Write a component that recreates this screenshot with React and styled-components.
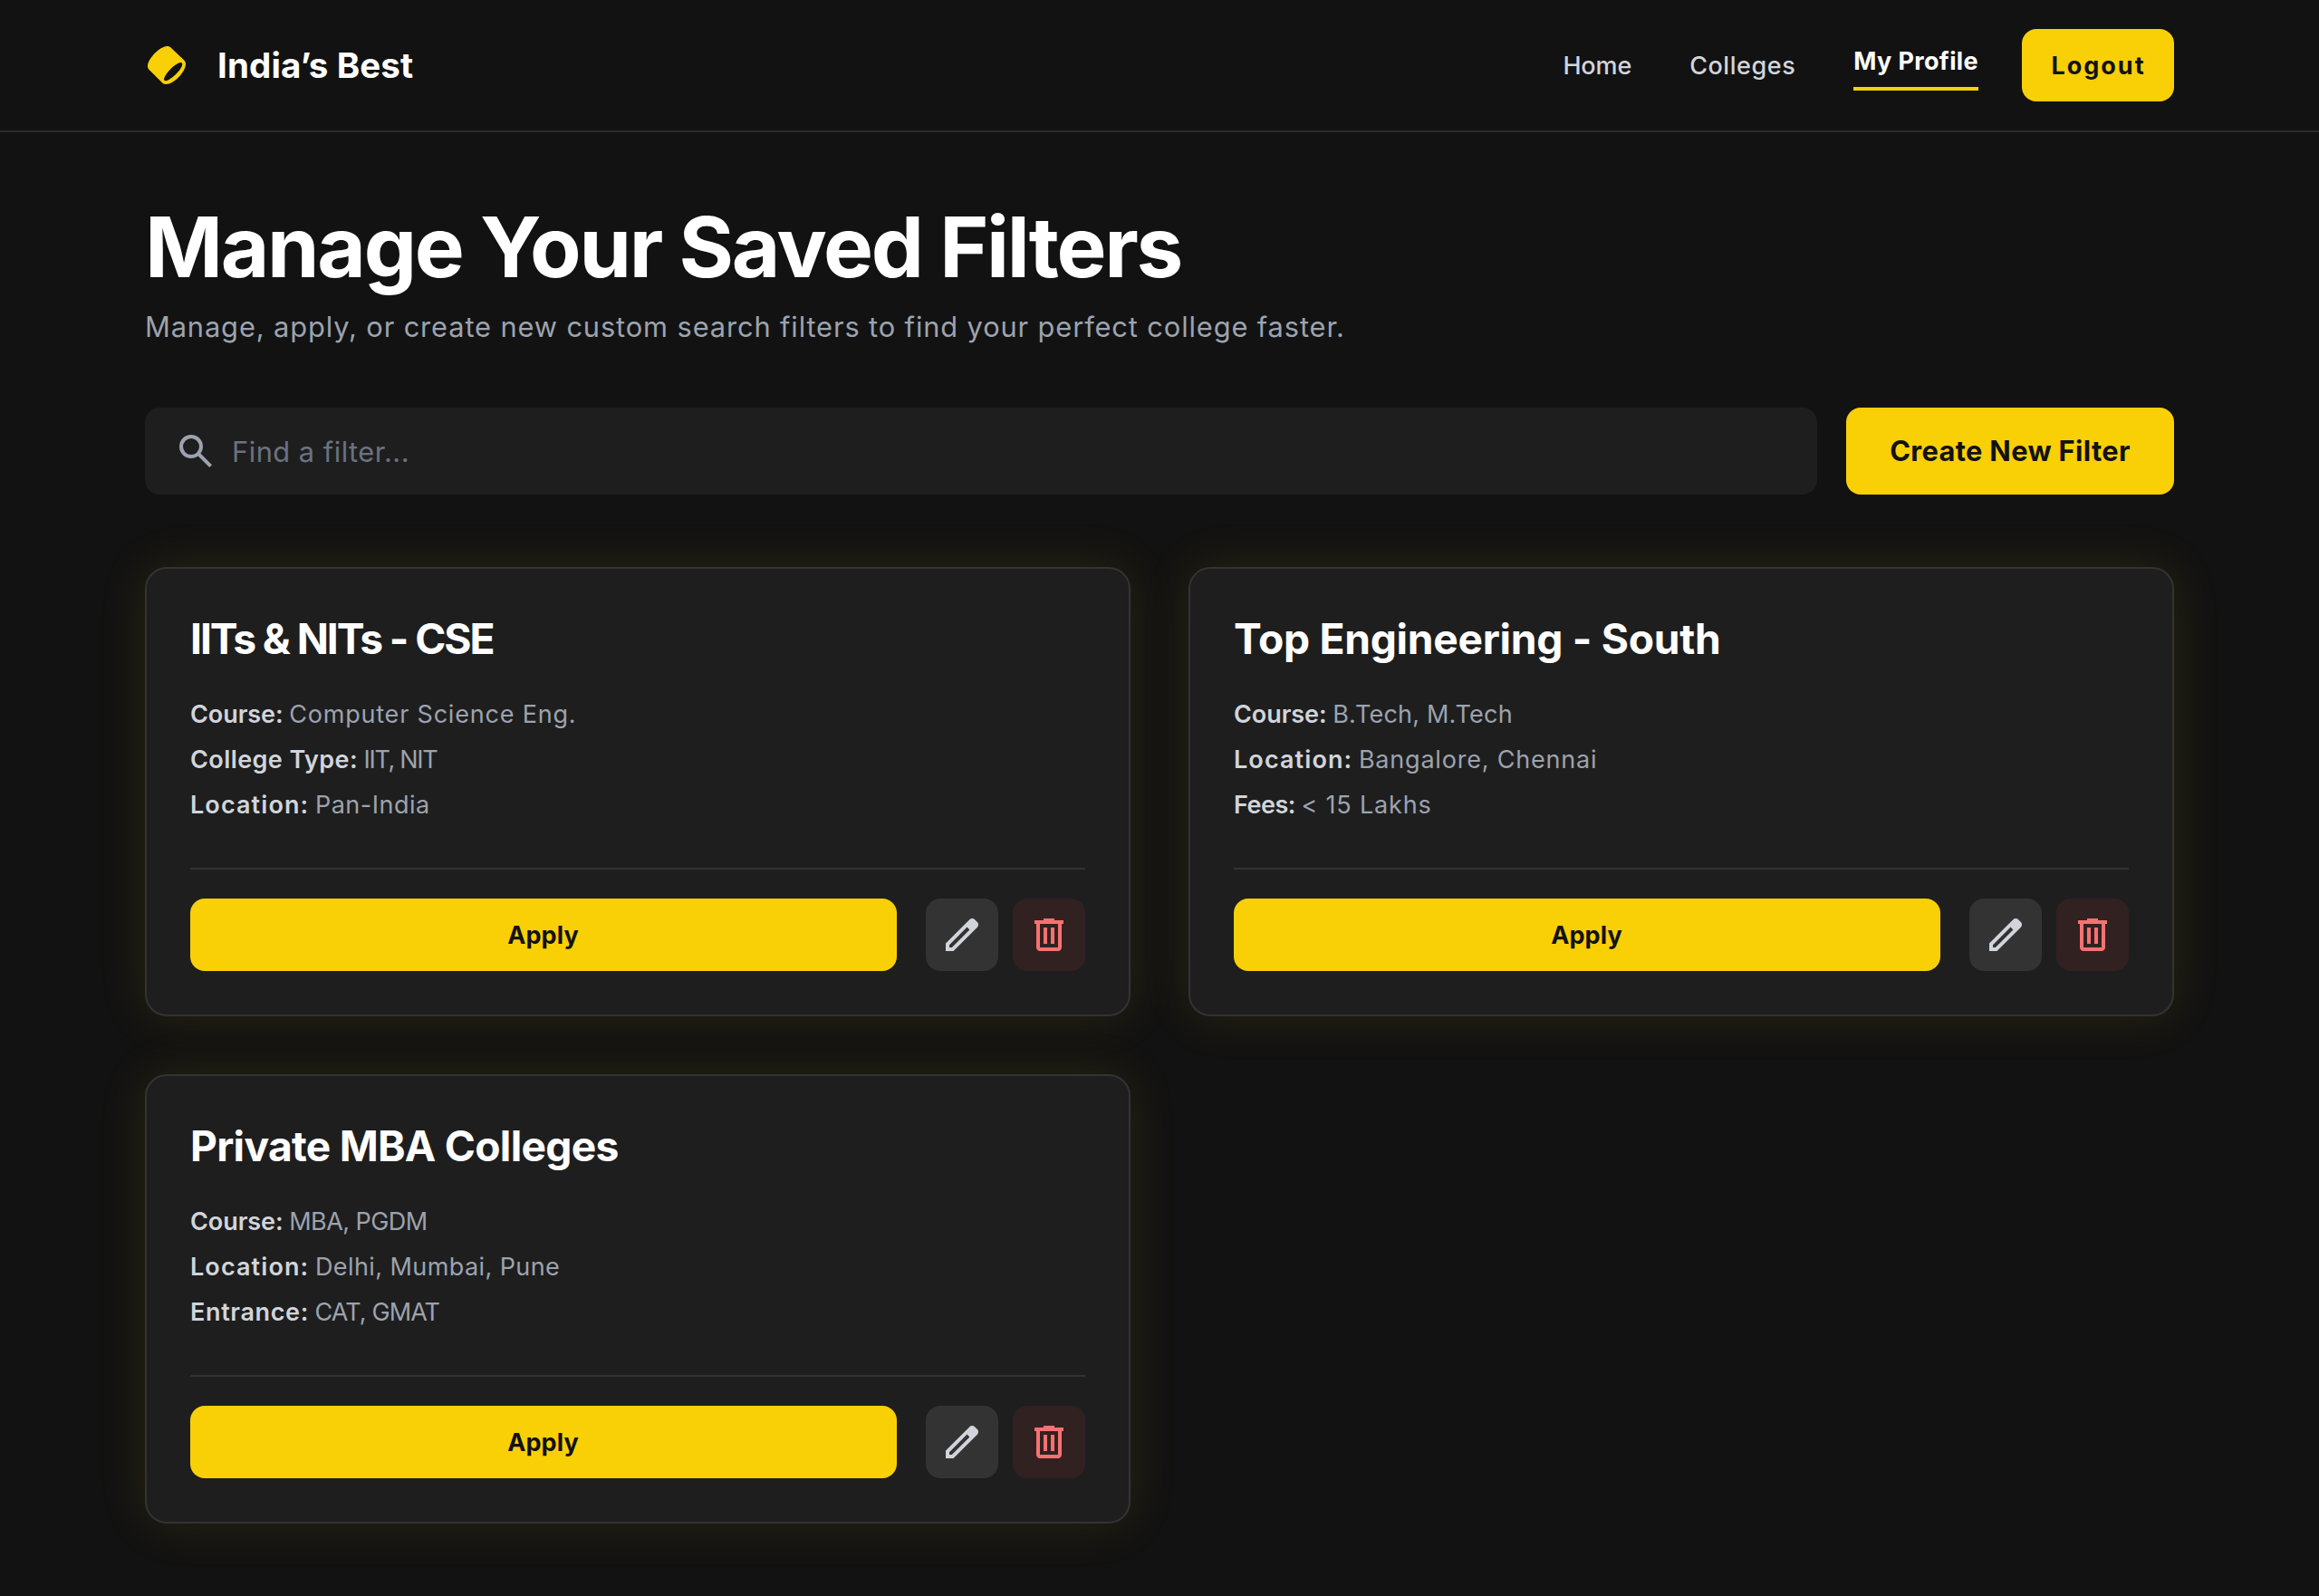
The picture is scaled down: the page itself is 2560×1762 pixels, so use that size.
import React from "react";
import styled, { createGlobalStyle } from "styled-components";

const color = {
  page: "#121212",
  surface: "#1e1e1e",
  line: "#333333",
  headerLine: "#2a2a2a",
  accent: "#f9d006",
  text: "#ffffff",
  soft: "#d1d5db",
  muted: "#9ca3af",
  faint: "#6b7280",
  danger: "#f87171",
};

const GlobalStyle = createGlobalStyle`
  *, *::before, *::after { box-sizing: border-box; }
  body {
    margin: 0;
    background: ${color.page};
    color: ${color.text};
    font-family: Inter, "Liberation Sans", sans-serif;
  }
  h1, h2, p, ul { margin: 0; padding: 0; }
  button, input { font-family: inherit; border: 0; }
`;

const Page = styled.div`
  min-height: 1762px;
  display: flex;
  flex-direction: column;
`;

const Header = styled.header`
  display: flex;
  align-items: center;
  justify-content: space-between;
  height: 146px;
  padding: 0 160px;
  border-bottom: 2px solid ${color.headerLine};
`;

const Brand = styled.div`
  display: flex;
  align-items: center;
  gap: 32px;
  font-size: 38.5px;
  font-weight: 700;
  line-height: 48px;
  letter-spacing: 0.11px;
`;

const Logo = styled.svg`
  display: block;
  width: 48px;
  height: 48px;
`;

const HeaderSide = styled.div`
  display: flex;
  align-items: center;
  gap: 48px;
`;

const Nav = styled.nav`
  display: flex;
  align-items: center;
  gap: 64px;
`;

const NavLink = styled.a`
  display: block;
  padding-top: 2px;
  font-size: 27px;
  line-height: 44px;
  white-space: nowrap;
  letter-spacing: ${(p) => p.$track}px;
  font-weight: ${(p) => (p.$active ? 700 : 500)};
  color: ${(p) => (p.$active ? color.text : color.soft)};
  ${(p) =>
    p.$active &&
    `
    line-height: 43px;
    padding-bottom: 7px;
    border-bottom: 4px solid ${color.accent};
  `}
`;

const Button = styled.button`
  display: flex;
  align-items: center;
  justify-content: center;
  padding: 0;
  border-radius: 16px;
  background: ${color.accent};
  color: ${color.page};
  font-weight: 700;
  white-space: nowrap;
`;

const LogoutButton = styled(Button)`
  width: 168px;
  height: 80px;
  padding-left: 1px;
  font-size: 27px;
  letter-spacing: 1.99px;
`;

const CreateButton = styled(Button)`
  flex: none;
  width: 362px;
  height: 96px;
  padding-bottom: 2px;
  font-size: 30.8px;
  letter-spacing: 0.35px;
`;

const ApplyButton = styled(Button)`
  flex: 1;
  height: 80px;
  padding-right: 1px;
  font-size: 27px;
  letter-spacing: 0.1px;
`;

const Main = styled.main`
  padding: 80px 160px;
`;

const Heading = styled.h1`
  font-size: 92.4px;
  font-weight: 700;
  line-height: 92px;
  letter-spacing: -2.31px;
`;

const Lead = styled.p`
  margin-top: 19px;
  font-size: 30.8px;
  line-height: 48px;
  letter-spacing: 0.88px;
  color: ${color.muted};
`;

const Toolbar = styled.div`
  display: flex;
  gap: 32px;
  margin: 65px 0 80px;
`;

const SearchField = styled.label`
  flex: 1;
  display: flex;
  align-items: center;
  gap: 16px;
  height: 96px;
  padding: 0 32px;
  border-radius: 16px;
  background: ${color.surface};
  color: ${color.muted};
`;

const SearchInput = styled.input`
  flex: 1;
  min-width: 0;
  height: 96px;
  padding: 1px 0 0;
  outline: 0;
  background: transparent;
  color: ${color.text};
  font-size: 30.8px;
  letter-spacing: 0.5px;
  &::placeholder {
    color: ${color.faint};
    opacity: 1;
  }
`;

const Symbol = styled.svg`
  display: block;
  flex: none;
  width: 48px;
  height: 48px;
  fill: currentColor;
`;

const Grid = styled.section`
  display: grid;
  grid-template-columns: 1fr 1fr;
  gap: 64px;
`;

const Card = styled.article`
  padding: 48px;
  border: 2px solid ${color.line};
  border-radius: 24px;
  background: ${color.surface};
  box-shadow: 0 0 56px rgba(249, 209, 6, 0.1);
`;

const CardTitle = styled.h2`
  font-size: 46.2px;
  font-weight: 700;
  line-height: 58px;
  letter-spacing: ${(p) => p.$track}px;
`;

const Details = styled.ul`
  margin: 30px 0 44px;
  list-style: none;
`;

const Detail = styled.li`
  font-size: 27px;
  line-height: 50px;
  white-space: nowrap;
  color: ${color.muted};
`;

const DetailLabel = styled.span`
  font-weight: 600;
  color: ${color.soft};
  letter-spacing: ${(p) => p.$track}px;
`;

const DetailValue = styled.span`
  margin-left: -1px;
  letter-spacing: ${(p) => p.$track}px;
`;

const Actions = styled.div`
  display: flex;
  gap: 32px;
  padding-top: 32px;
  border-top: 2px solid ${color.line};
`;

const IconGroup = styled.div`
  display: flex;
  gap: 16px;
`;

const IconButton = styled.button`
  display: flex;
  align-items: center;
  justify-content: center;
  width: 80px;
  height: 80px;
  padding: 0;
  border-radius: 16px;
  background: ${(p) => (p.$danger ? "rgba(239, 68, 68, 0.1)" : color.line)};
  color: ${(p) => (p.$danger ? color.danger : color.soft)};
`;

const symbols = {
  search:
    "M784-120 532-372q-30 24-69 38t-83 14q-109 0-184.5-75.5T120-580q0-109 75.5-184.5T380-840q109 0 184.5 75.5T640-580q0 44-14 83t-38 69l252 252-56 56ZM380-400q75 0 127.5-52.5T560-580q0-75-52.5-127.5T380-760q-75 0-127.5 52.5T200-580q0 75 52.5 127.5T380-400Z",
  edit:
    "M200-200h57l391-391-57-57-391 391v57Zm-80 80v-170l528-527q12-11 26.5-17t30.5-6q16 0 31 6t26 18l55 56q12 11 17.5 26t5.5 30q0 16-5.5 30.5T817-647L290-120H120Z",
  trash:
    "M280-120q-33 0-56.5-23.5T200-200v-520h-40v-80h200v-40h240v40h200v80h-40v520q0 33-23.5 56.5T680-120H280Zm400-600H280v520h400v-520ZM360-280h80v-360h-80v360Zm160 0h80v-360h-80v360Z",
};

const Icon = ({ name }) => (
  <Symbol viewBox="0 -960 960 960" aria-hidden="true">
    <path d={symbols[name]} />
  </Symbol>
);

const labelTrack = {
  Course: -0.06,
  "College Type": 0.42,
  Location: 1.1,
  Fees: -0.5,
  Entrance: 0.64,
};

const filters = [
  {
    title: "IITs & NITs - CSE",
    track: -2.06,
    details: [
      ["Course", "Computer Science Eng.", 0.8],
      ["College Type", "IIT, NIT", -1.33],
      ["Location", "Pan-India", 0.52],
    ],
  },
  {
    title: "Top Engineering - South",
    track: -0.29,
    details: [
      ["Course", "B.Tech, M.Tech", 0.18],
      ["Location", "Bangalore, Chennai", 0.8],
      ["Fees", "< 15 Lakhs", 0.82],
    ],
  },
  {
    title: "Private MBA Colleges",
    track: -0.73,
    details: [
      ["Course", "MBA, PGDM", -0.54],
      ["Location", "Delhi, Mumbai, Pune", 0.42],
      ["Entrance", "CAT, GMAT", -0.91],
    ],
  },
];

const FilterCard = ({ title, track, details }) => (
  <Card>
    <CardTitle $track={track}>{title}</CardTitle>
    <Details>
      {details.map(([label, value, valueTrack]) => (
        <Detail key={label}>
          <DetailLabel $track={labelTrack[label]}>{label}:</DetailLabel>{" "}
          <DetailValue $track={valueTrack}>{value}</DetailValue>
        </Detail>
      ))}
    </Details>
    <Actions>
      <ApplyButton>Apply</ApplyButton>
      <IconGroup>
        <IconButton aria-label="Edit">
          <Icon name="edit" />
        </IconButton>
        <IconButton $danger aria-label="Delete">
          <Icon name="trash" />
        </IconButton>
      </IconGroup>
    </Actions>
  </Card>
);

export default function App() {
  return (
    <Page>
      <GlobalStyle />
      <Header>
        <Brand>
          <Logo viewBox="-9 -9 144 144" aria-hidden="true">
            <path
              fill={color.accent}
              d="M64 0C70 0 74 2 78 6L120 46C124 50 126 54 126 60C125 85 88 126 60 126C55 126 51 124 48 121L5 78C1 74 0 70 0 65C2 40 40 1 64 0Z"
            />
            <ellipse cx="84.5" cy="84.5" rx="41" ry="12.5" transform="rotate(-45 84.5 84.5)" fill={color.page} />
          </Logo>
          <span>India’s Best</span>
        </Brand>
        <HeaderSide>
          <Nav>
            <NavLink $track={-0.13}>Home</NavLink>
            <NavLink $track={0.55}>Colleges</NavLink>
            <NavLink $track={0.36} $active>
              My Profile
            </NavLink>
          </Nav>
          <LogoutButton>Logout</LogoutButton>
        </HeaderSide>
      </Header>
      <Main>
        <Heading>Manage Your Saved Filters</Heading>
        <Lead>Manage, apply, or create new custom search filters to find your perfect college faster.</Lead>
        <Toolbar>
          <SearchField>
            <Icon name="search" />
            <SearchInput placeholder="Find a filter..." />
          </SearchField>
          <CreateButton>Create New Filter</CreateButton>
        </Toolbar>
        <Grid>
          {filters.map((filter) => (
            <FilterCard key={filter.title} {...filter} />
          ))}
        </Grid>
      </Main>
    </Page>
  );
}
